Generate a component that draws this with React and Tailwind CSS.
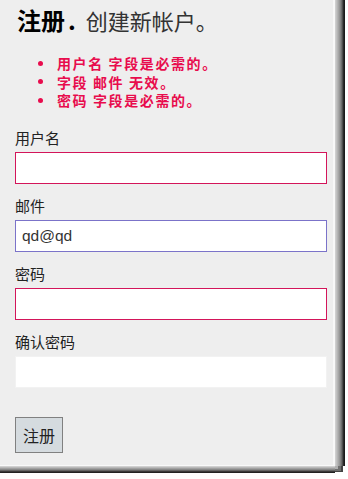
import React from "react";

const cjk = "font-['Noto_Sans_CJK_SC','Noto_Sans',sans-serif]";

function Field({ label, border, value, gap }) {
  return (
    <div className={gap ? "mt-[12px]" : ""}>
      <div className={`${cjk} text-[15px] leading-[20px] text-[#222]`}>{label}</div>
      <div
        className={`mt-[4px] h-[32px] w-[312px] bg-white border ${border} flex items-center px-[6px] font-['Liberation_Sans',sans-serif] text-[15.5px] text-[#333]`}
      >
        {value}
      </div>
    </div>
  );
}

export default function App() {
  const errors = ["用户名 字段是必需的。", "字段 邮件 无效。", "密码 字段是必需的。"];
  return (
    <div className="w-[348px] h-[479px] bg-white overflow-hidden">
      <div className="w-[335px] h-[466px] bg-[#eeeeee] border-r-2 border-b border-[#f8f8f8] pl-[15px] pt-[5px] shadow-[1px_0_0_#cfcfcf,2px_0_0_#c2c2c2,3px_0_0_#b4b4b4,4px_0_0_#a6a6a6,5px_0_0_#979797,6px_0_0_#858585,7px_0_0_#6e6e6e,8px_0_0_#4e4e4e,9px_0_0_#2a2a2a,10px_0_0_#1a1a1a,0_1px_0_#cfcfcf,0_2px_0_#b8b8b8,0_3px_0_#a0a0a0,0_4px_0_#888888,0_5px_0_#666666,0_6px_0_#3a3a3a,0_7px_0_#222222,3px_3px_0_#b0b0b0,6px_5px_0_#707070,8px_6px_0_#444444]">
        <div className={`${cjk} flex items-baseline h-[30px] leading-[30px]`}>
          <span className="ml-[2px] text-[24px] font-bold text-black">注册</span>
          <span className="ml-[3px] text-[24px] font-bold text-black">.</span>
          <span className="text-[22px] text-[#333] ml-[10px]">创建新帐户。</span>
        </div>
        <ul className={`${cjk} mt-[19px] text-[14px] leading-[18.5px] tracking-[1.6px] font-bold text-[#e80c4d]`}>
          {errors.map((e) => (
            <li key={e} className="flex items-center">
              <span className="ml-[23px] w-[5px] h-[5px] rounded-full bg-[#e80c4d]" />
              <span className="ml-[14px]">{e}</span>
            </li>
          ))}
        </ul>
        <div className="mt-[18px]">
          <Field label="用户名" border="border-[#d3155a]" />
          <Field label="邮件" border="border-[#7b73c9]" value="qd@qd" gap />
          <Field label="密码" border="border-[#d3155a]" gap />
          <Field label="确认密码" border="border-[#f2f2f2]" gap />
        </div>
        <button
          className={`${cjk} mt-[29px] w-[48px] h-[36px] bg-[#d5dbdf] border border-[#808080] text-[16px] text-[#222] flex items-center justify-center`}
        >
          注册
        </button>
      </div>
    </div>
  );
}
